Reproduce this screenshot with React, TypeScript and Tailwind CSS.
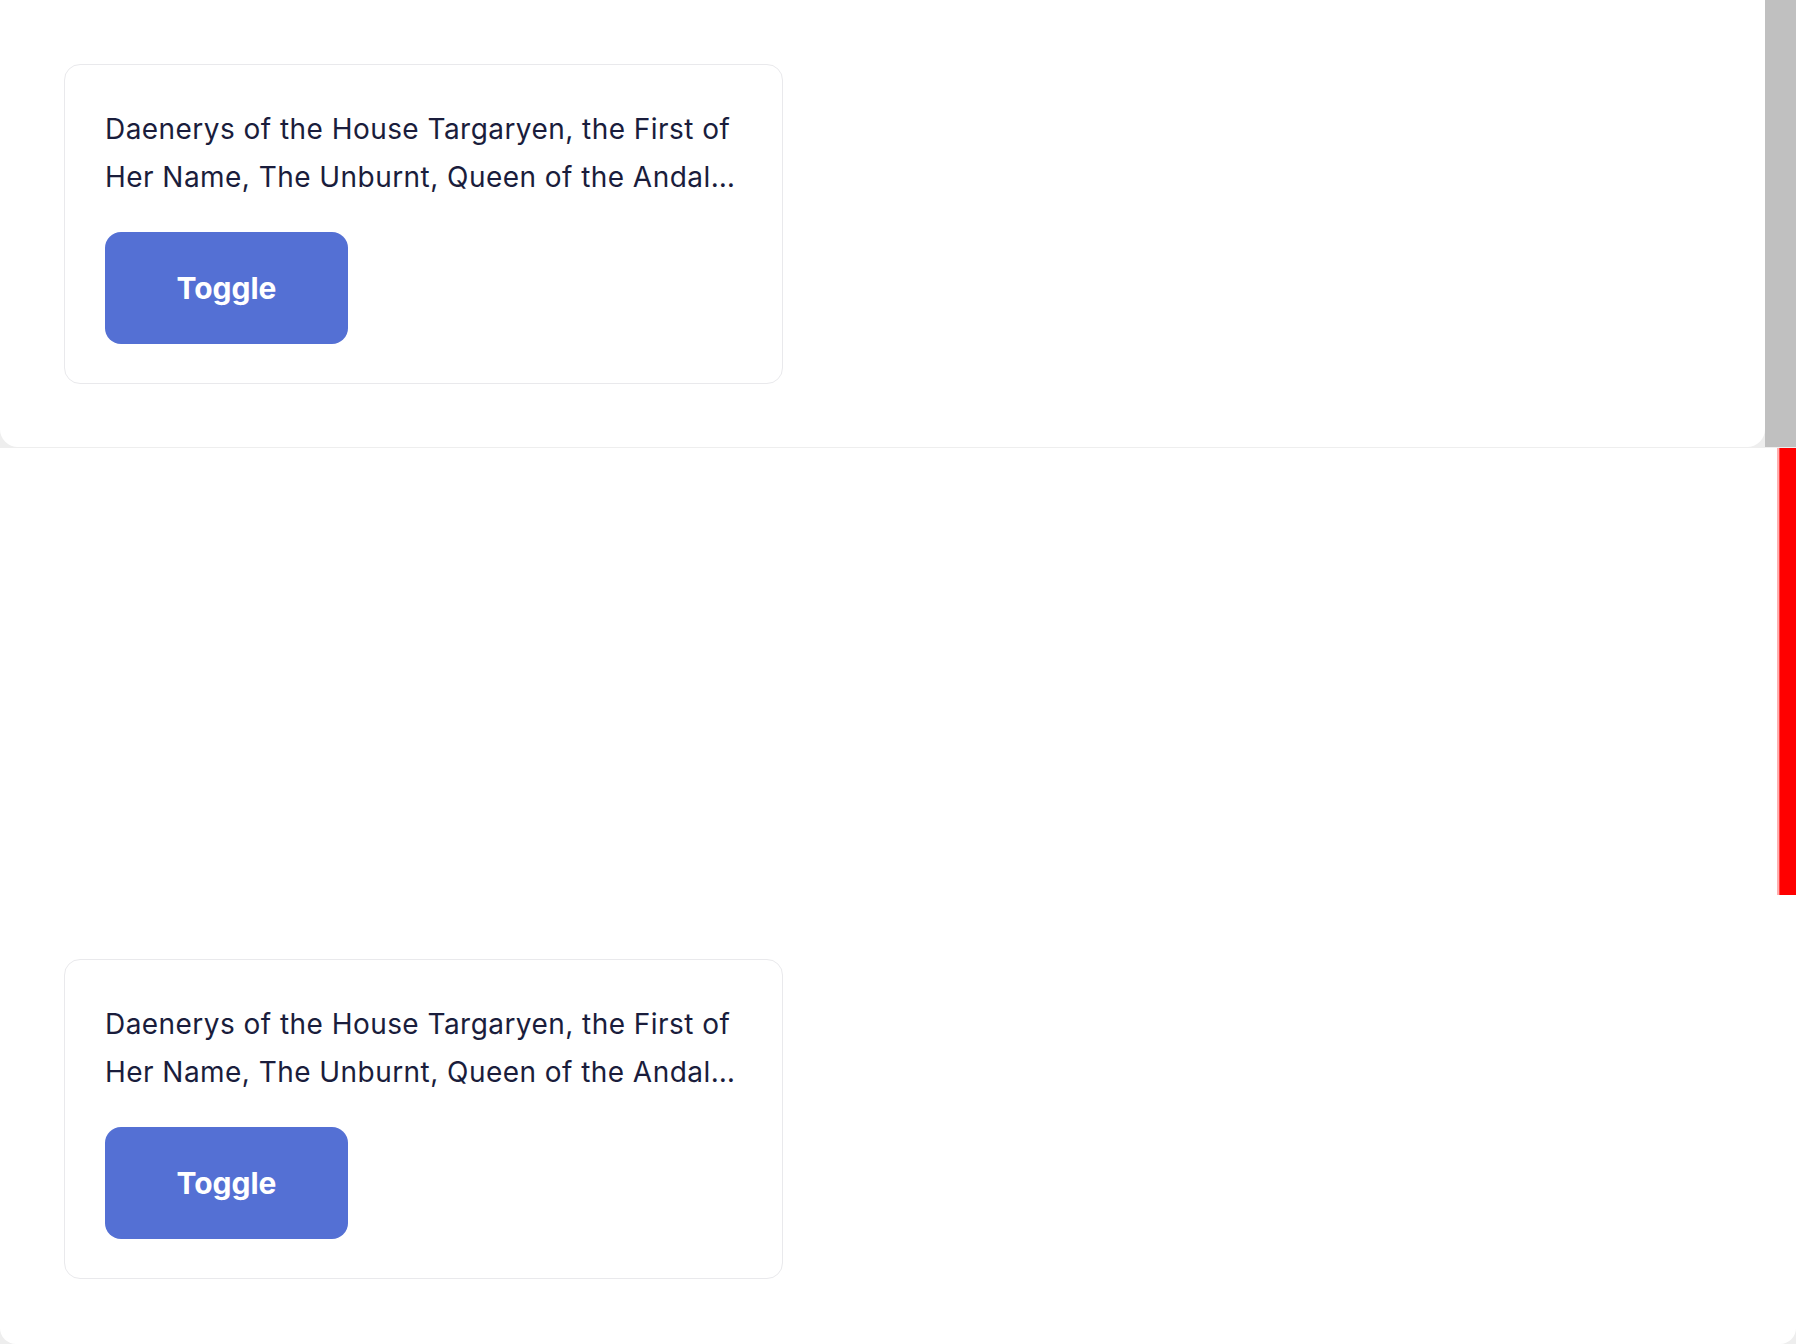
import React from "react";

const TEXT =
  "Daenerys of the House Targaryen, the First of Her Name, The Unburnt, Queen of the Andals and the First Men, Khaleesi of the Great Grass Sea, Breaker of Chains, and Mother of Dragons";

function Card() {
  return (
    <div className="w-[719px] rounded-2xl border border-[#e9e9ec] bg-white px-10 pt-10 pb-[39px]">
      <p className="line-clamp-2 text-[28px] leading-[48px] text-[#1a1d3c] tracking-[0.45px]">
        {TEXT}
      </p>
      <button className="mt-[31px] flex h-[112px] w-[243px] items-center justify-center rounded-2xl bg-[#5470d4] text-[30px] font-bold text-white">
        Toggle
      </button>
    </div>
  );
}

export default function App() {
  return (
    <div
      className="flex h-[1344px] w-full flex-col overflow-hidden bg-[#eeeeee]"
      style={{ fontFamily: "Inter, 'Noto Sans', sans-serif" }}
    >
      <div className="flex h-[447px] shrink-0">
        <div className="flex-1 rounded-b-[18px] bg-white p-16">
          <Card />
        </div>
        <div className="w-[31px] bg-[#c0c0c0]" />
      </div>
      <div className="relative mt-px flex flex-1 flex-col justify-end rounded-b-[16px] bg-white px-16 pb-[65px]">
        <Card />
        <div className="absolute right-0 top-0 flex h-[447px] w-[19px]">
          <div className="w-[2px] bg-[#ffb0b0]" />
          <div className="w-px bg-[#ff4040]" />
          <div className="flex-1 bg-[#ff0000]" />
        </div>
      </div>
    </div>
  );
}
